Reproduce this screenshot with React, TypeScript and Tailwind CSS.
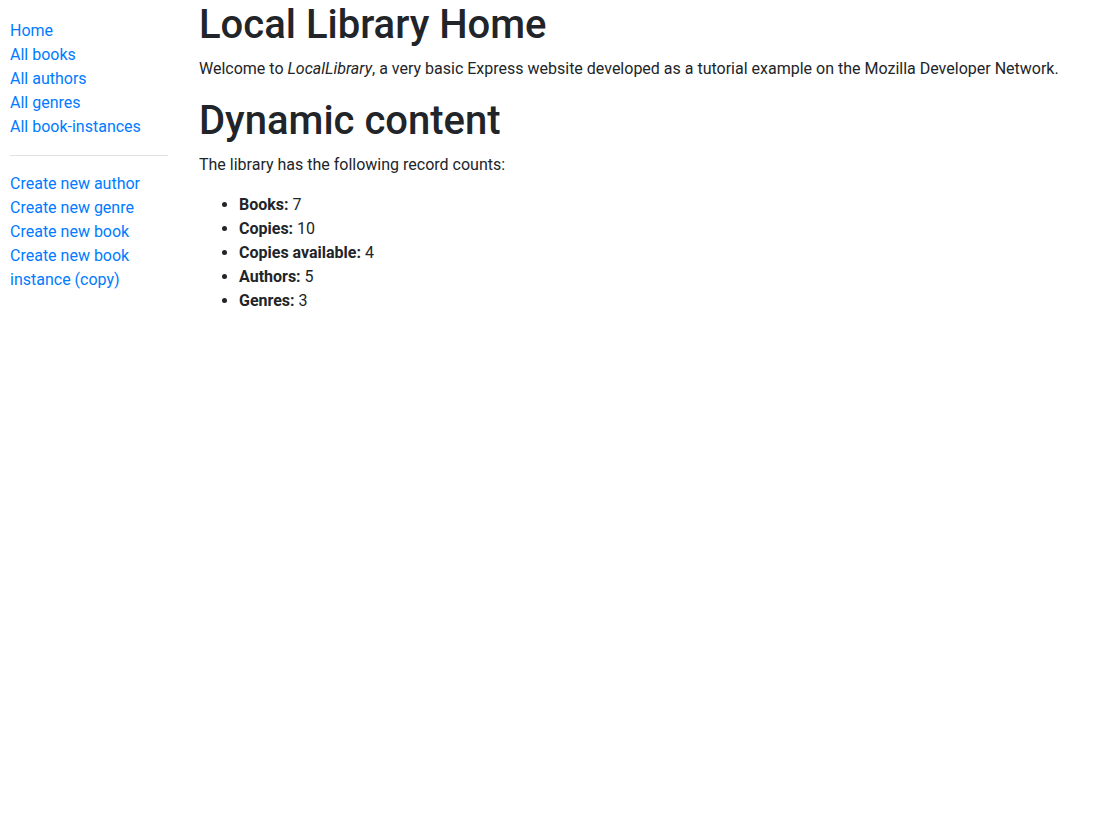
const font = { fontFamily: 'Roboto, "Noto Sans", sans-serif' };

const browseLinks = ["Home", "All books", "All authors", "All genres", "All book-instances"];
const createLinks = ["Create new author", "Create new genre", "Create new book", "Create new book instance (copy)"];

const counts = [
  ["Books:", "7"],
  ["Copies:", "10"],
  ["Copies available:", "4"],
  ["Authors:", "5"],
  ["Genres:", "3"],
];

export default function App() {
  return (
    <div className="min-h-[826px] bg-white pt-px text-[16px] leading-6 text-[#212529]" style={font}>
      <div className="flex">
        {/* sidebar */}
        <div className="ml-[10px] w-[158px] shrink-0 pt-[18px]">
          <ul>
            {browseLinks.map((l) => (
              <li key={l}>
                <a href="#" className="text-[#007bff]">{l}</a>
              </li>
            ))}
          </ul>
          <hr className="my-4 border-t border-[#e2e2e2]" />
          <ul>
            {createLinks.map((l) => (
              <li key={l}>
                <a href="#" className="text-[#007bff]">{l}</a>
              </li>
            ))}
          </ul>
        </div>

        {/* main content */}
        <div className="ml-[31px] flex-1">
          <h1 className="mb-2 text-[40px] font-medium leading-[48px]">Local Library Home</h1>
          <p className="mb-4">
            Welcome to <em>LocalLibrary</em>, a very basic Express website developed as a tutorial example on the Mozilla Developer Network.
          </p>
          <h1 className="mb-2 text-[40px] font-medium leading-[48px]">Dynamic content</h1>
          <p className="mb-4">The library has the following record counts:</p>
          <ul className="list-disc pl-10">
            {counts.map(([k, v]) => (
              <li key={k}>
                <strong className="font-bold">{k}</strong> {v}
              </li>
            ))}
          </ul>
        </div>
      </div>
    </div>
  );
}
